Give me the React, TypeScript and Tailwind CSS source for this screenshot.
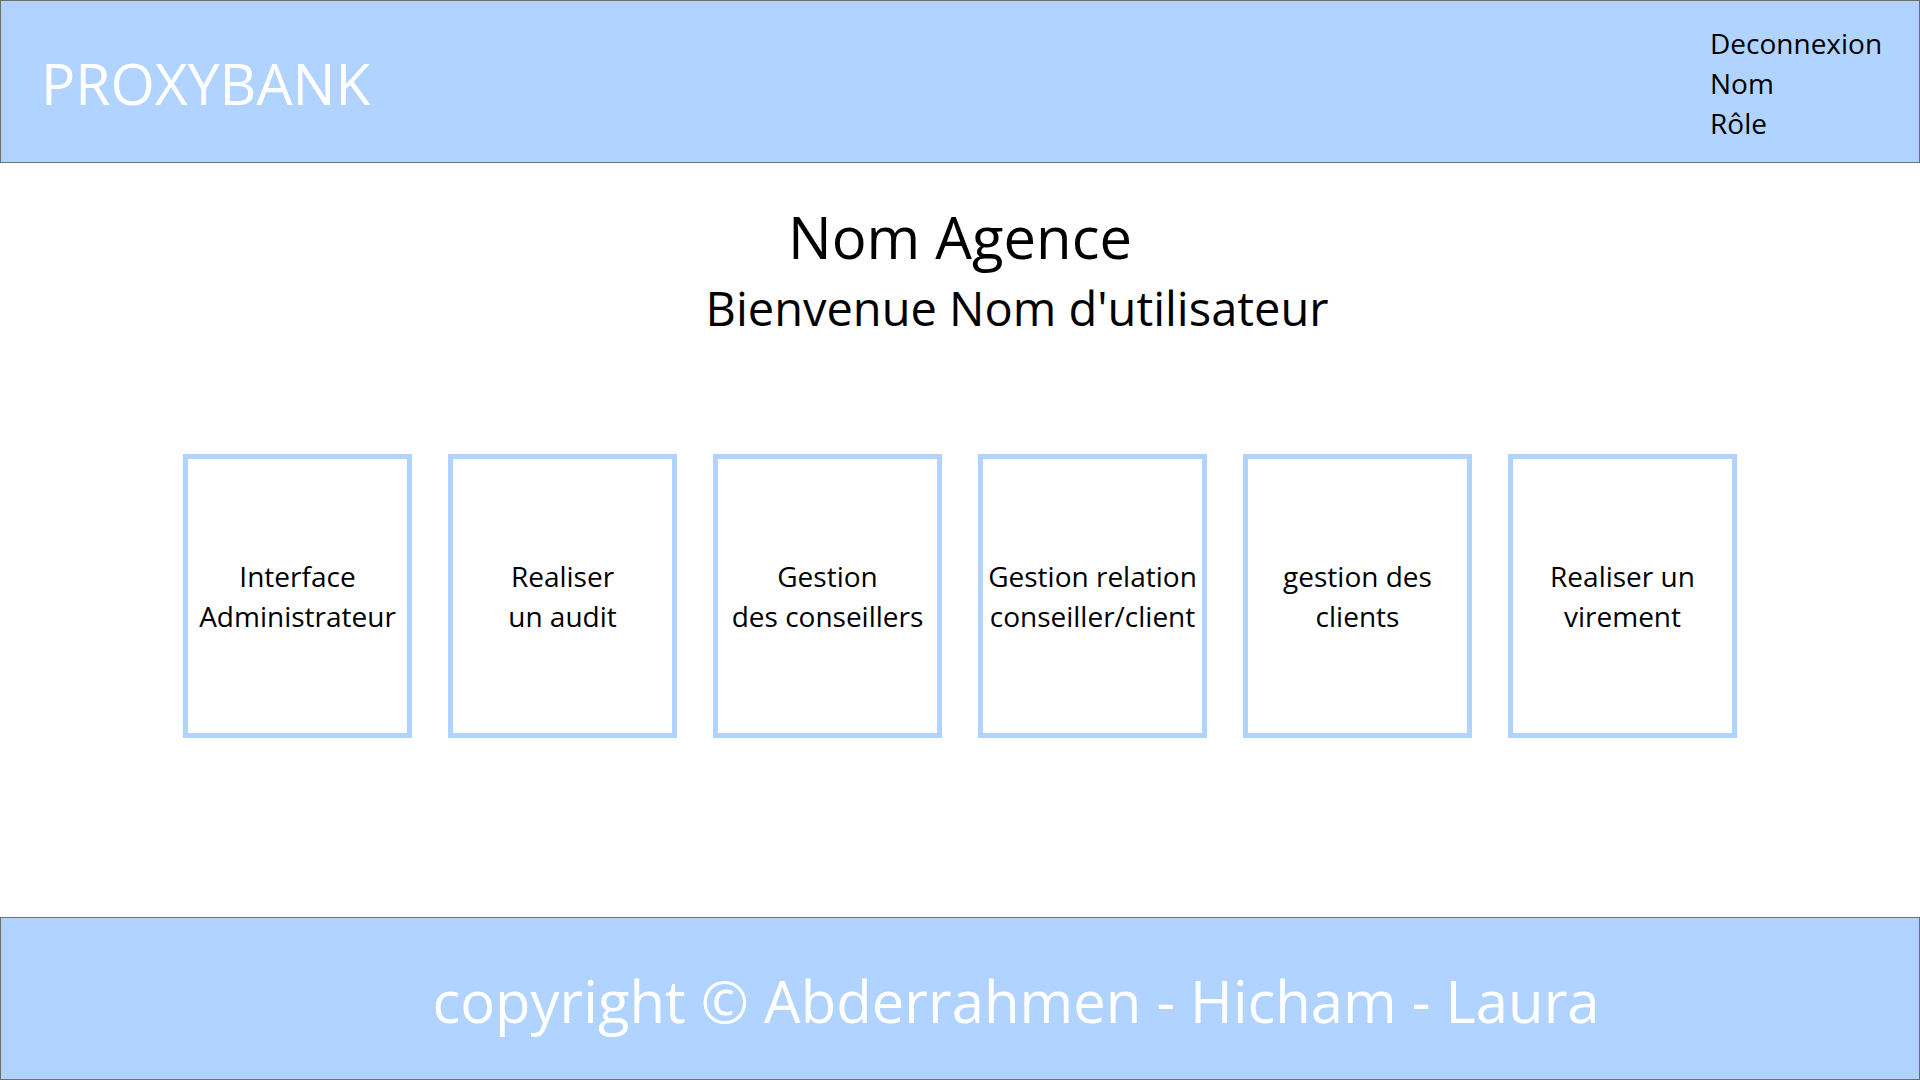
export default function App() {
  const tiles = [
    ["Interface", "Administrateur"],
    ["Realiser", "un audit"],
    ["Gestion", "des conseillers"],
    ["Gestion relation", "conseiller/client"],
    ["gestion des", "clients"],
    ["Realiser un", "virement"],
  ];

  return (
    <div
      className="h-screen w-full flex flex-col bg-white text-black"
      style={{ fontFamily: '"Open Sans", "Noto Sans", sans-serif' }}
    >
      <header className="h-[163px] shrink-0 bg-[#b0d3ff] border border-[#6e6e6e] flex items-center justify-between">
        <h1 className="pl-[40px] pt-[4px] text-[57px] leading-none text-white">PROXYBANK</h1>
        <div className="w-[209px] self-start pt-[22px] text-[28px] leading-[40px]">
          <p>Deconnexion</p>
          <p>Nom</p>
          <p>Rôle</p>
        </div>
      </header>

      <main className="flex-1 flex flex-col items-center">
        <h2 className="mt-[38px] text-[58px] leading-[72px]">Nom Agence</h2>
        <h3 className="ml-[114px] mt-[5px] text-[47px] leading-[60px]">Bienvenue Nom d'utilisateur</h3>

        <div className="mt-[116px] flex gap-[36px]">
          {tiles.map(([a, b]) => (
            <div
              key={a + b}
              className="w-[229px] h-[284px] border-[5px] border-[#b0d3ff] flex flex-col items-center justify-center text-center text-[28px] leading-[40px]"
            >
              <span className="whitespace-nowrap">{a}</span>
              <span className="whitespace-nowrap">{b}</span>
            </div>
          ))}
        </div>
      </main>

      <footer className="h-[163px] shrink-0 bg-[#b0d3ff] border border-[#6e6e6e] flex items-center justify-center pl-[112px]">
        <p className="pt-[4px] text-[58px] leading-none text-white">copyright © Abderrahmen - Hicham - Laura</p>
      </footer>
    </div>
  );
}
